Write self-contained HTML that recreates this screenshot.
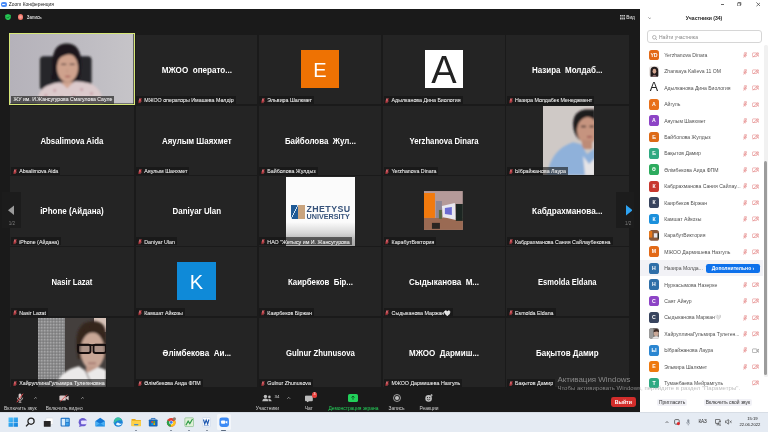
<!DOCTYPE html>
<html lang="ru"><head><meta charset="utf-8"><title>Zoom Конференция</title>
<style>
*{box-sizing:border-box;margin:0;padding:0}
html,body{width:768px;height:432px;overflow:hidden;background:#1a1a1a;font-family:"Liberation Sans","DejaVu Sans",sans-serif}
.abs,.tile,.lb,.sq,.nm,.pr,.vid,.pv,.sqimg,.zh{position:absolute}
#wrap{position:absolute;left:-6px;top:-6px;width:780px;height:444px;overflow:hidden;filter:blur(.4px);will-change:transform}
#in{position:absolute;left:6px;top:6px;width:768px;height:432px}
#title{left:-6px;top:-6px;width:780px;height:15px;background:#fff}
#title>*{transform:translate(6px,6px)}
#title .zi{position:absolute;left:1.1px;top:1.7px;width:5.600px;height:5.600px;border-radius:2px;background:#4a8cf7}
#title .zi:after{content:'';position:absolute;left:1.2px;top:1.900px;width:2.600px;height:1.900px;border-radius:.4px;background:#fff;box-shadow:1.500px 0 0 -.4px #fff}
#title .tt{position:absolute;left:8.8px;top:1.8px;font-size:4.9px;line-height:6px;color:#222;white-space:nowrap}
#main{left:-6px;top:9px;width:646px;height:403px;background:#1a1a1a}
.tile{background:#242424;overflow:hidden}
.tile.act{border:1.3px solid #d6e777}
.vid{left:0;top:0;width:100%;height:100%}
.pv{top:0;height:100%}
.nm{left:0;right:0;top:50%;margin-top:-5.6px;height:12px;line-height:12px;text-align:center;color:#fff;font-weight:bold;font-size:8.5px;white-space:nowrap;transform:scaleX(.95)}
.sq{left:50%;top:50%;width:38.4px;height:38.6px;margin:-20px 0 0 -19.2px;text-align:center;line-height:40.2px}
.sqimg{left:50%;top:50%;width:38.8px;height:38.9px;margin:-19.6px 0 0 -19.6px}
.lb{left:.8px;bottom:.2px;height:8.2px;padding:1.6px 2px 0 1.2px;background:rgba(18,18,18,.6);color:#f2f2f2;-webkit-text-stroke:.06px #f2f2f2;font-size:5.3px;line-height:6.6px;white-space:nowrap;display:flex;align-items:center}
.lb.nm0{left:1px;bottom:.2px;padding:0 2px 0 2px;font-size:5.15px;height:7.6px;line-height:7.6px;background:rgba(40,40,40,.72)}
.lb .m{width:4px;height:5.6px;margin:0 2.2px 0 .6px;flex:none;opacity:.92}
.zh{left:27.4px;top:.2px;width:69px;height:69px;background:#fbfbfb;overflow:hidden}
.zhb{position:absolute;left:0;right:0;bottom:0;height:24px;background:linear-gradient(#fbfbfb,#d8d8d8 45%,#b4b4b4 75%,#a8a8a8)}
.zlogo{position:absolute;left:5px;top:28px;width:14px;height:14.4px}
.zlogo i{position:absolute;left:0;top:0;width:7px;height:100%;background:linear-gradient(115deg,#1f5a96 46%,#cfe0f0 47%,#cfe0f0 53%,#1f5a96 54%)}
.zlogo b{position:absolute;right:0;top:0;width:6.6px;height:100%;background:#c9a47e}
.zt1,.zt2{position:absolute;left:20.6px;color:#36527a;font-weight:bold;white-space:nowrap}
.zt1{top:27.4px;font-size:8.8px;line-height:10px;letter-spacing:.4px}
.zt2{top:36.6px;font-size:7.2px;line-height:8px}
/* top overlay */
.sh{left:5px;top:14px;width:6px;height:6.4px}
.rec{left:17.7px;top:14.100px;width:5.800px;height:5.800px;border-radius:50%;background:radial-gradient(circle,#f9b0a8 0,#f58a7e 40%,#ea5246 100%)}
.rect{left:26.8px;top:13.6px;font-size:4.5px;line-height:7px;color:#fff;white-space:nowrap}
.vidl{left:619.6px;top:13.8px;font-size:4.8px;line-height:7px;color:#eee;white-space:nowrap;display:flex;align-items:center}
.vidl svg{width:5px;height:5px;margin-right:1.6px}
/* arrows */
.arb{top:192px;width:19px;height:36px;background:#1c1c1c}
.arn{font-size:4.6px;line-height:5px;color:#7c7c7c;text-align:center;width:19px;top:221px}
/* toolbar */
#tb{left:0;top:387.6px;width:640px;height:24.6px;background:#1a1a1a;box-shadow:-6px 0 0 #1a1a1a}
.tl{position:absolute;top:18px;font-size:4.9px;line-height:6px;color:#d2d2d2;white-space:nowrap;transform:translateX(-50%)}
.ti{position:absolute;transform:translate(-50%,-50%)}
.car{position:absolute;top:9.4px;width:3.4px;height:2px}
.leave{left:611px;top:397.2px;width:24.6px;height:10.2px;border-radius:2.4px;background:#d22d2b;color:#fff;font-size:5.2px;font-weight:bold;line-height:10.2px;text-align:center}
/* panel */
#panel{left:640px;top:9px;width:128px;height:403.2px;background:#fff;box-shadow:6px 0 0 #fff}
.ph{left:0;top:5px;width:128px;text-align:center;font-size:5.1px;font-weight:bold;line-height:8px;color:#222}
.srch{left:7.4px;top:21.4px;width:114.6px;height:12.8px;border:.6px solid #d6d6d6;border-radius:3px;background:#fff}
.srch span{position:absolute;left:10.6px;top:3px;font-size:5px;line-height:6.4px;color:#888;white-space:nowrap}
.srch svg{position:absolute;left:3.8px;top:3.6px;width:5.4px;height:5.4px}
.pr{left:0;width:123px;height:16.4px;top:0}
.pr.hl{background:#f2f2f6}
.av{position:absolute;left:8.6px;top:2.8px;width:10.8px;height:10.8px;border-radius:2.6px;color:#fff;font-size:5.2px;font-weight:bold;line-height:10.8px;text-align:center}
.av.big{background:#fff;color:#222;font-size:12.5px;font-weight:normal;border-radius:0}
.pn{position:absolute;left:24.2px;top:5.2px;font-size:5.1px;line-height:6px;color:#505050;white-space:nowrap}
.pm{position:absolute;left:102.6px;top:5.4px;width:4.3px;height:6px}
.pvd{position:absolute;left:111.6px;top:5.6px;width:7.4px;height:5.5px}
.more{position:absolute;left:66px;top:3.8px;width:54px;height:8.8px;border-radius:2.2px;background:#0e71eb;color:#fff;font-size:5px;font-weight:bold;line-height:8.8px;text-align:center;white-space:nowrap}
.pbtn{top:389.6px;height:7.6px;border-radius:2px;background:#f1f1f6;color:#333;font-size:4.9px;line-height:7.6px;text-align:center;white-space:nowrap}
.sbt{left:124.4px;top:36px;width:3.6px;height:332px;background:#f1f1f1;border-radius:1.5px}
.sbh{left:124.4px;top:152px;width:3px;height:214px;background:#9c9c9c;border-radius:1.5px}
/* watermark */
.wm1{left:557.4px;top:375.4px;font-size:7.95px;line-height:9px;color:rgba(170,170,170,.75);white-space:nowrap}
.wm2{left:557.4px;top:385.4px;font-size:6.05px;line-height:6px;color:rgba(170,170,170,.75);white-space:nowrap}
/* taskbar */
#task{left:0;top:412.2px;width:768px;height:19.8px;background:#e5ebf3;box-shadow:0 0 0 6px #e5ebf3;clip-path:inset(0 -6px -6px -6px)}
.tk{position:absolute;top:5px;width:10.4px;height:10.4px}
.tray{position:absolute;font-size:4.6px;line-height:6px;color:#222;white-space:nowrap}
.wc{position:absolute;top:0;color:#333}
</style></head><body>
<div id="wrap"><div id="in">
<div id="title" class="abs"><div class="zi"></div><div class="tt">Zoom Конференция</div>
<svg class="abs" style="left:720.6px;top:3.6px;width:3.6px;height:1px" viewBox="0 0 4 1"><rect width="4" height="1" fill="#555"/></svg>
<svg class="abs" style="left:737.4px;top:2px;width:4.4px;height:4.4px" viewBox="0 0 5 5"><rect x=".4" y="1.2" width="3.4" height="3.4" rx=".6" fill="none" stroke="#333" stroke-width=".7"/><path d="M1.4 1V.5h3v3h-.5" fill="none" stroke="#333" stroke-width=".7"/></svg>
<svg class="abs" style="left:755.6px;top:1.8px;width:4.8px;height:4.8px" viewBox="0 0 5 5"><path d="M.4.4L4.6 4.6M4.6.4L.4 4.6" stroke="#333" stroke-width=".7"/></svg>
</div>
<div id="main" class="abs"></div>
<div class="tile act" style="left:9.4px;top:33.4px;width:125.4px;height:71.5px"><svg class="vid" viewBox="0 0 124 70" preserveAspectRatio="none">
<defs><linearGradient id="g1" x1="0" x2="1"><stop offset="0" stop-color="#b5b2ba"/><stop offset=".6" stop-color="#bebcc2"/><stop offset="1" stop-color="#c6c4c8"/></linearGradient>
<filter id="b1"><feGaussianBlur stdDeviation="1.1"/></filter></defs>
<rect width="124" height="70" fill="url(#g1)"/>
<g filter="url(#b1)">
<rect x="30" y="22.5" width="52" height="34" rx="4" fill="#25252b"/>
<path d="M42.500 30 q0 -20.500 14.500 -20.500 q14.500 0 14.500 20 q0 12 -2 17 h-6 v-14 h-16 v14 h-6.500 q2 -8 1.500 -16.500z" fill="#1c191d"/>
<ellipse cx="57.800" cy="34" rx="10.600" ry="14.600" fill="#cfa28d"/>
<path d="M45.500 29 q2 -14 12 -13.500 q10 .5 12.500 12 q-5 -7 -11 -7 q-8 1 -13.500 8.500z" fill="#1c191d"/>
<path d="M27 70 q1 -14 10 -18 q8 -3 13 -3.500 l7.500 4.500 l8 -5.500 q10 .5 17 3 q10 5 11 19.500z" fill="#dccacc"/>
<path d="M50.500 47.500 l7 7.500 l7.500 -8 q-7 3 -14.500 .5z" fill="#d3a692"/>
<path d="M51.500 30.500 h5M60 30.500 h5" stroke="#4a3434" stroke-width="1.200"/>
<path d="M57.500 36 v3" stroke="#c09480" stroke-width="1.200"/>
<rect x="55.500" y="42" width="5" height="1.600" fill="#a8605c"/>
<circle cx="36" cy="62" r="1.500" fill="#c9a0a8"/><circle cx="45" cy="57" r="1.500" fill="#c9a0a8"/><circle cx="72" cy="56" r="1.500" fill="#c9a0a8"/><circle cx="82" cy="60" r="1.500" fill="#c9a0a8"/><circle cx="64" cy="63" r="1.500" fill="#c9a0a8"/><circle cx="52" cy="64" r="1.500" fill="#c9a0a8"/><circle cx="90" cy="66" r="1.500" fill="#c9a0a8"/>
</g></svg><div class="lb nm0"><span>ЖУ им. И.Жансугурова Смагулова Сауле</span></div></div>
<div class="tile" style="left:135.5px;top:35.0px;width:121.7px;height:69.2px"><div class="nm" style="transform:scaleX(0.953)">МЖОО&nbsp; операто...</div><div class="lb"><svg class="m" viewBox="0 0 5 6.6"><rect x="1.400" y=".2" width="2.200" height="4" rx="1.100" fill="#e07a80"/><path d="M.6 3a1.900 1.900 0 0 0 3.800 0M2.500 5v1.300" stroke="#dd5a62" stroke-width=".8" fill="none"/><path d="M4.500 .3L.6 6.300" stroke="#f0323c" stroke-width=".9"/></svg><span>МЖОО операторы Имашева Мөлдір</span></div></div>
<div class="tile" style="left:258.6px;top:35.0px;width:122.8px;height:69.2px"><div class="sq" style="background:#ee7203;color:#fff;font-size:20px">E</div><div class="lb"><svg class="m" viewBox="0 0 5 6.6"><rect x="1.400" y=".2" width="2.200" height="4" rx="1.100" fill="#e07a80"/><path d="M.6 3a1.900 1.900 0 0 0 3.800 0M2.500 5v1.300" stroke="#dd5a62" stroke-width=".8" fill="none"/><path d="M4.500 .3L.6 6.300" stroke="#f0323c" stroke-width=".9"/></svg><span>Эльвира Шалкмет</span></div></div>
<div class="tile" style="left:382.8px;top:35.0px;width:122.1px;height:69.2px"><div class="sq" style="background:#fff;color:#222;font-size:38px">A</div><div class="lb"><svg class="m" viewBox="0 0 5 6.6"><rect x="1.400" y=".2" width="2.200" height="4" rx="1.100" fill="#e07a80"/><path d="M.6 3a1.900 1.900 0 0 0 3.800 0M2.500 5v1.300" stroke="#dd5a62" stroke-width=".8" fill="none"/><path d="M4.500 .3L.6 6.300" stroke="#f0323c" stroke-width=".9"/></svg><span>Адылканова Дина Биология</span></div></div>
<div class="tile" style="left:506.2px;top:35.0px;width:122.6px;height:69.2px"><div class="nm" style="transform:scaleX(0.941)">Назира&nbsp; Молдаб...</div><div class="lb"><svg class="m" viewBox="0 0 5 6.6"><rect x="1.400" y=".2" width="2.200" height="4" rx="1.100" fill="#e07a80"/><path d="M.6 3a1.900 1.900 0 0 0 3.800 0M2.500 5v1.300" stroke="#dd5a62" stroke-width=".8" fill="none"/><path d="M4.500 .3L.6 6.300" stroke="#f0323c" stroke-width=".9"/></svg><span>Назира Молдабек Менеджмент</span></div></div>
<div class="tile" style="left:10.4px;top:105.7px;width:123.8px;height:69.2px"><div class="nm" style="transform:scaleX(0.924)">Absalimova Aida</div><div class="lb"><svg class="m" viewBox="0 0 5 6.6"><rect x="1.400" y=".2" width="2.200" height="4" rx="1.100" fill="#e07a80"/><path d="M.6 3a1.900 1.900 0 0 0 3.800 0M2.500 5v1.300" stroke="#dd5a62" stroke-width=".8" fill="none"/><path d="M4.500 .3L.6 6.300" stroke="#f0323c" stroke-width=".9"/></svg><span>Absalimova Aida</span></div></div>
<div class="tile" style="left:135.5px;top:105.7px;width:121.7px;height:69.2px"><div class="nm" style="transform:scaleX(0.926)">Аяулым Шаяхмет</div><div class="lb"><svg class="m" viewBox="0 0 5 6.6"><rect x="1.400" y=".2" width="2.200" height="4" rx="1.100" fill="#e07a80"/><path d="M.6 3a1.900 1.900 0 0 0 3.800 0M2.500 5v1.300" stroke="#dd5a62" stroke-width=".8" fill="none"/><path d="M4.500 .3L.6 6.300" stroke="#f0323c" stroke-width=".9"/></svg><span>Аяулым Шаяхмет</span></div></div>
<div class="tile" style="left:258.6px;top:105.7px;width:122.8px;height:69.2px"><div class="nm" style="transform:scaleX(0.933)">Байболова&nbsp; Жул...</div><div class="lb"><svg class="m" viewBox="0 0 5 6.6"><rect x="1.400" y=".2" width="2.200" height="4" rx="1.100" fill="#e07a80"/><path d="M.6 3a1.900 1.900 0 0 0 3.800 0M2.500 5v1.300" stroke="#dd5a62" stroke-width=".8" fill="none"/><path d="M4.500 .3L.6 6.300" stroke="#f0323c" stroke-width=".9"/></svg><span>Байболова Жулдыз</span></div></div>
<div class="tile" style="left:382.8px;top:105.7px;width:122.1px;height:69.2px"><div class="nm" style="transform:scaleX(0.907)">Yerzhanova Dinara</div><div class="lb"><svg class="m" viewBox="0 0 5 6.6"><rect x="1.400" y=".2" width="2.200" height="4" rx="1.100" fill="#e07a80"/><path d="M.6 3a1.900 1.900 0 0 0 3.800 0M2.500 5v1.300" stroke="#dd5a62" stroke-width=".8" fill="none"/><path d="M4.500 .3L.6 6.300" stroke="#f0323c" stroke-width=".9"/></svg><span>Yerzhanova Dinara</span></div></div>
<div class="tile" style="left:506.2px;top:105.7px;width:122.6px;height:69.2px"><svg class="pv" style="left:36.5px;width:51.5px" viewBox="0 0 51.5 69.2" preserveAspectRatio="none">
<defs><filter id="b2"><feGaussianBlur stdDeviation="0.9"/></filter></defs>
<rect width="51.5" height="69.2" fill="#cfc9c6"/>
<g filter="url(#b2)">
<path d="M30 17 q1 -12 12 -13.500 h10 v30 h-16 q-6 -6 -6 -16.500z" fill="#1e1a1b"/>
<ellipse cx="44.500" cy="24.500" rx="10.500" ry="13.500" fill="#c6947f"/>
<path d="M33.500 21 q3 -11 18 -11.500 v-5 h-12 q-8 2 -8 16z" fill="#1e1a1b"/>
<rect x="39" y="34" width="10" height="9" fill="#bd8b77"/>
<path d="M4 69.2 q4 -26 26 -33 l8 2 l6 10 l8 -6 v27z" fill="#8fb1da"/>
<path d="M40 50 l6 8 l6 -6 v17 h-10z" fill="#e6e4e6"/>
<path d="M38 20.500 h5M46.500 20.500 h4.500" stroke="#3a2828" stroke-width="1.400"/>
<path d="M44 30.800 h5" stroke="#9a5050" stroke-width="1.500"/>
</g></svg><div class="lb"><svg class="m" viewBox="0 0 5 6.6"><rect x="1.400" y=".2" width="2.200" height="4" rx="1.100" fill="#e07a80"/><path d="M.6 3a1.900 1.900 0 0 0 3.800 0M2.500 5v1.300" stroke="#dd5a62" stroke-width=".8" fill="none"/><path d="M4.500 .3L.6 6.300" stroke="#f0323c" stroke-width=".9"/></svg><span>Ыбрайжанова Лаура</span></div></div>
<div class="tile" style="left:10.4px;top:176.4px;width:123.8px;height:69.2px"><div class="nm" style="transform:scaleX(0.938)">iPhone (Айдана)</div><div class="lb"><svg class="m" viewBox="0 0 5 6.6"><rect x="1.400" y=".2" width="2.200" height="4" rx="1.100" fill="#e07a80"/><path d="M.6 3a1.900 1.900 0 0 0 3.800 0M2.500 5v1.300" stroke="#dd5a62" stroke-width=".8" fill="none"/><path d="M4.500 .3L.6 6.300" stroke="#f0323c" stroke-width=".9"/></svg><span>iPhone (Айдана)</span></div></div>
<div class="tile" style="left:135.5px;top:176.4px;width:121.7px;height:69.2px"><div class="nm" style="transform:scaleX(0.933)">Daniyar Ulan</div><div class="lb"><svg class="m" viewBox="0 0 5 6.6"><rect x="1.400" y=".2" width="2.200" height="4" rx="1.100" fill="#e07a80"/><path d="M.6 3a1.900 1.900 0 0 0 3.800 0M2.500 5v1.300" stroke="#dd5a62" stroke-width=".8" fill="none"/><path d="M4.500 .3L.6 6.300" stroke="#f0323c" stroke-width=".9"/></svg><span>Daniyar Ulan</span></div></div>
<div class="tile" style="left:258.6px;top:176.4px;width:122.8px;height:69.2px"><div class="zh"><div class="zhb"></div>
<div class="zlogo"><i></i><b></b></div>
<div class="zt1">ZHETYSU</div><div class="zt2">UNIVERSITY</div></div><div class="lb"><svg class="m" viewBox="0 0 5 6.6"><rect x="1.400" y=".2" width="2.200" height="4" rx="1.100" fill="#e07a80"/><path d="M.6 3a1.900 1.900 0 0 0 3.800 0M2.500 5v1.300" stroke="#dd5a62" stroke-width=".8" fill="none"/><path d="M4.500 .3L.6 6.300" stroke="#f0323c" stroke-width=".9"/></svg><span>НАО &quot;Жетысу им И. Жансугурова</span></div></div>
<div class="tile" style="left:382.8px;top:176.4px;width:122.1px;height:69.2px"><svg class="sqimg" viewBox="0 0 39 39">
<defs><filter id="b4"><feGaussianBlur stdDeviation="0.8"/></filter></defs>
<rect width="39" height="39" fill="#b59a99"/>
<g filter="url(#b4)">
<rect y="27" width="39" height="12" fill="#9a6a52"/>
<rect x="0" y="2" width="11" height="25" fill="#f27a10"/>
<rect x="12" y="10" width="6" height="17" fill="#8d8795"/>
<path d="M18 15 L31 12 L32 29 L19 26z" fill="#e8e8f0"/>
<path d="M21 17 L28 16 L28 24 L21 23z" fill="#6c6cd2"/>
<rect x="32" y="13" width="7" height="17" fill="#1c2822"/>
<rect x="8" y="32" width="8" height="6" fill="#2a2624"/>
<rect x="15" y="19" width="3" height="9" fill="#5a6a40"/>
</g></svg><div class="lb"><svg class="m" viewBox="0 0 5 6.6"><rect x="1.400" y=".2" width="2.200" height="4" rx="1.100" fill="#e07a80"/><path d="M.6 3a1.900 1.900 0 0 0 3.800 0M2.500 5v1.300" stroke="#dd5a62" stroke-width=".8" fill="none"/><path d="M4.500 .3L.6 6.300" stroke="#f0323c" stroke-width=".9"/></svg><span>КарабутВиктория</span></div></div>
<div class="tile" style="left:506.2px;top:176.4px;width:122.6px;height:69.2px"><div class="nm" style="transform:scaleX(0.962)">Кабдрахманова...</div><div class="lb"><svg class="m" viewBox="0 0 5 6.6"><rect x="1.400" y=".2" width="2.200" height="4" rx="1.100" fill="#e07a80"/><path d="M.6 3a1.900 1.900 0 0 0 3.800 0M2.500 5v1.300" stroke="#dd5a62" stroke-width=".8" fill="none"/><path d="M4.500 .3L.6 6.300" stroke="#f0323c" stroke-width=".9"/></svg><span>Кабдрахманова Сания Сайлаубековна</span></div></div>
<div class="tile" style="left:10.4px;top:247.1px;width:123.8px;height:69.2px"><div class="nm" style="transform:scaleX(0.904)">Nasir Lazat</div><div class="lb"><svg class="m" viewBox="0 0 5 6.6"><rect x="1.400" y=".2" width="2.200" height="4" rx="1.100" fill="#e07a80"/><path d="M.6 3a1.900 1.900 0 0 0 3.800 0M2.500 5v1.300" stroke="#dd5a62" stroke-width=".8" fill="none"/><path d="M4.500 .3L.6 6.300" stroke="#f0323c" stroke-width=".9"/></svg><span>Nasir Lazat</span></div></div>
<div class="tile" style="left:135.5px;top:247.1px;width:121.7px;height:69.2px"><div class="sq" style="background:#0f8ad8;color:#fff;font-size:20px">K</div><div class="lb"><svg class="m" viewBox="0 0 5 6.6"><rect x="1.400" y=".2" width="2.200" height="4" rx="1.100" fill="#e07a80"/><path d="M.6 3a1.900 1.900 0 0 0 3.800 0M2.500 5v1.300" stroke="#dd5a62" stroke-width=".8" fill="none"/><path d="M4.500 .3L.6 6.300" stroke="#f0323c" stroke-width=".9"/></svg><span>Камшат Айкозы</span></div></div>
<div class="tile" style="left:258.6px;top:247.1px;width:122.8px;height:69.2px"><div class="nm" style="transform:scaleX(0.923)">Каирбеков&nbsp; Бір...</div><div class="lb"><svg class="m" viewBox="0 0 5 6.6"><rect x="1.400" y=".2" width="2.200" height="4" rx="1.100" fill="#e07a80"/><path d="M.6 3a1.900 1.900 0 0 0 3.800 0M2.500 5v1.300" stroke="#dd5a62" stroke-width=".8" fill="none"/><path d="M4.500 .3L.6 6.300" stroke="#f0323c" stroke-width=".9"/></svg><span>Каирбеков Біржан</span></div></div>
<div class="tile" style="left:382.8px;top:247.1px;width:122.1px;height:69.2px"><div class="nm" style="transform:scaleX(0.945)">Сыдыканова&nbsp; М...</div><div class="lb"><svg class="m" viewBox="0 0 5 6.6"><rect x="1.400" y=".2" width="2.200" height="4" rx="1.100" fill="#e07a80"/><path d="M.6 3a1.900 1.900 0 0 0 3.800 0M2.500 5v1.300" stroke="#dd5a62" stroke-width=".8" fill="none"/><path d="M4.500 .3L.6 6.300" stroke="#f0323c" stroke-width=".9"/></svg><span>Сыдыканова Маржан🤍</span></div></div>
<div class="tile" style="left:506.2px;top:247.1px;width:122.6px;height:69.2px"><div class="nm" style="transform:scaleX(0.89)">Esmolda Eldana</div><div class="lb"><svg class="m" viewBox="0 0 5 6.6"><rect x="1.400" y=".2" width="2.200" height="4" rx="1.100" fill="#e07a80"/><path d="M.6 3a1.900 1.900 0 0 0 3.800 0M2.500 5v1.300" stroke="#dd5a62" stroke-width=".8" fill="none"/><path d="M4.500 .3L.6 6.300" stroke="#f0323c" stroke-width=".9"/></svg><span>Esmolda Eldana</span></div></div>
<div class="tile" style="left:10.4px;top:317.8px;width:123.8px;height:69.2px"><svg class="pv" style="left:27.6px;width:68px" viewBox="0 0 68 69.2" preserveAspectRatio="none">
<defs><filter id="b3"><feGaussianBlur stdDeviation="0.9"/></filter><filter id="b3b"><feGaussianBlur stdDeviation="0.45"/></filter>
<pattern id="pt" width="3" height="3" patternUnits="userSpaceOnUse"><rect width="3" height="3" fill="#8a8a8b"/><rect x="0" y="0" width="1.4" height="1.4" fill="#a6a6a7"/><rect x="1.6" y="1.700" width="1.200" height="1.200" fill="#777778"/></pattern></defs>
<rect width="68" height="69.2" fill="#443f3d"/>
<rect width="27" height="69.2" fill="url(#pt)"/>
<rect x="56" width="12" height="14" fill="#d6c2b8"/>
<g filter="url(#b3)">
<path d="M38.500 30 q-2 -26 16 -27 q13.500 0 13.500 14 v24 h-28z" fill="#35251f"/>
<ellipse cx="54.500" cy="33" rx="12" ry="18.500" fill="#c9a797"/>
<path d="M41 24 q3 -16 16 -16 q10 1 11 11 q-9 -7 -17 -4 q-6 3 -10 9z" fill="#35251f"/>
<rect x="48" y="48" width="12" height="8" fill="#bf9a8a"/>
<path d="M17 69.2 q5 -17 24 -21 l9 6.500 l10 -5.500 q5 1 8 3 v17z" fill="#ebe9e9"/>
<path d="M46 50 q6 12 8 19" stroke="#3a3030" stroke-width=".8" fill="none"/>
<rect x="50" y="44.500" width="8" height="1.600" fill="#a0706a"/>
</g>
<g filter="url(#b3b)">
<rect x="39" y="26.200" width="29" height="1.800" fill="#141111"/>
<rect x="40" y="26.800" width="12.500" height="8.200" rx="2" fill="rgba(120,110,105,.35)" stroke="#141111" stroke-width="1.900"/>
<rect x="55.500" y="26.800" width="12.500" height="8.200" rx="2" fill="rgba(120,110,105,.35)" stroke="#141111" stroke-width="1.900"/>
</g></svg><div class="lb"><svg class="m" viewBox="0 0 5 6.6"><rect x="1.400" y=".2" width="2.200" height="4" rx="1.100" fill="#e07a80"/><path d="M.6 3a1.900 1.900 0 0 0 3.800 0M2.500 5v1.300" stroke="#dd5a62" stroke-width=".8" fill="none"/><path d="M4.500 .3L.6 6.300" stroke="#f0323c" stroke-width=".9"/></svg><span>ХайруллинаГульмира Тулегеновна</span></div></div>
<div class="tile" style="left:135.5px;top:317.8px;width:121.7px;height:69.2px"><div class="nm" style="transform:scaleX(0.946)">Әлімбекова&nbsp; Аи...</div><div class="lb"><svg class="m" viewBox="0 0 5 6.6"><rect x="1.400" y=".2" width="2.200" height="4" rx="1.100" fill="#e07a80"/><path d="M.6 3a1.900 1.900 0 0 0 3.800 0M2.500 5v1.300" stroke="#dd5a62" stroke-width=".8" fill="none"/><path d="M4.500 .3L.6 6.300" stroke="#f0323c" stroke-width=".9"/></svg><span>Әлімбекова Аида ФПМ</span></div></div>
<div class="tile" style="left:258.6px;top:317.8px;width:122.8px;height:69.2px"><div class="nm" style="transform:scaleX(0.913)">Gulnur Zhunusova</div><div class="lb"><svg class="m" viewBox="0 0 5 6.6"><rect x="1.400" y=".2" width="2.200" height="4" rx="1.100" fill="#e07a80"/><path d="M.6 3a1.900 1.900 0 0 0 3.800 0M2.500 5v1.300" stroke="#dd5a62" stroke-width=".8" fill="none"/><path d="M4.500 .3L.6 6.300" stroke="#f0323c" stroke-width=".9"/></svg><span>Gulnur Zhunusova</span></div></div>
<div class="tile" style="left:382.8px;top:317.8px;width:122.1px;height:69.2px"><div class="nm" style="transform:scaleX(0.945)">МЖОО&nbsp; Дармиш...</div><div class="lb"><svg class="m" viewBox="0 0 5 6.6"><rect x="1.400" y=".2" width="2.200" height="4" rx="1.100" fill="#e07a80"/><path d="M.6 3a1.900 1.900 0 0 0 3.800 0M2.500 5v1.300" stroke="#dd5a62" stroke-width=".8" fill="none"/><path d="M4.500 .3L.6 6.300" stroke="#f0323c" stroke-width=".9"/></svg><span>МЖОО Дармишева Назгуль</span></div></div>
<div class="tile" style="left:506.2px;top:317.8px;width:122.6px;height:69.2px"><div class="nm" style="transform:scaleX(0.938)">Бақытов Дамир</div><div class="lb"><svg class="m" viewBox="0 0 5 6.6"><rect x="1.400" y=".2" width="2.200" height="4" rx="1.100" fill="#e07a80"/><path d="M.6 3a1.900 1.900 0 0 0 3.800 0M2.500 5v1.300" stroke="#dd5a62" stroke-width=".8" fill="none"/><path d="M4.500 .3L.6 6.300" stroke="#f0323c" stroke-width=".9"/></svg><span>Бақытов Дамир</span></div></div>
<svg class="abs sh" viewBox="0 0 6 6.4"><path d="M3 .1L5.8 1v2.4Q5.8 5.4 3 6.3Q.2 5.4.2 3.400V1z" fill="#25c553"/><path d="M1.8 3.200l.9.900L4.300 2.400" stroke="#0c5a25" stroke-width=".7" fill="none"/></svg>
<div class="abs rec"></div><div class="abs rect">Запись</div>
<div class="abs vidl"><svg viewBox="0 0 5 5"><path d="M0 .5h5M0 2h5M0 3.500h5M0 5h5" stroke="#eee" stroke-width=".8"/><path d="M1.700 0v5M3.400 0v5" stroke="#1a1a1a" stroke-width=".5"/></svg>Вид</div>
<div class="abs arb" style="left:2.4px"></div>
<svg class="abs" style="left:7.800px;top:205px;width:6.6px;height:10.6px" viewBox="0 0 6.6 10.6"><path d="M6.600 0V10.600L0 5.300z" fill="#9b9b9b"/></svg>
<div class="abs arn" style="left:2.400px">1/2</div>
<div class="abs arb" style="left:616px;width:17.6px"></div>
<svg class="abs" style="left:625.6px;top:205.4px;width:6.6px;height:10.6px" viewBox="0 0 6.6 10.6"><path d="M0 0V10.600L6.600 5.300z" fill="#2ea3f2"/></svg>
<div class="abs arn" style="left:618.6px">1/2</div>

<div id="tb" class="abs">
 <svg class="ti" style="left:20.2px;top:10.6px;width:8px;height:9.700px" viewBox="0 0 7.4 9"><rect x="2.400" y=".4" width="2.600" height="5" rx="1.300" fill="#d9c9c9"/><path d="M1.200 4.200a2.500 2.500 0 0 0 5 0M3.700 6.800v1.600M2.400 8.500h2.600" stroke="#d9c9c9" stroke-width=".7" fill="none"/><path d="M6.600 .4L.8 8.400" stroke="#e0474a" stroke-width=".9"/></svg>
 <svg class="car" style="left:34px" viewBox="0 0 3.400 2"><path d="M.2 1.800L1.700.3l1.500 1.500" stroke="#ccc" stroke-width=".6" fill="none"/></svg>
 <div class="tl" style="left:20.4px">Включить звук</div>
 <svg class="ti" style="left:64px;top:10.8px;width:10px;height:7.6px" viewBox="0 0 10 7.6"><rect x=".4" y="1.200" width="6.400" height="5.200" rx="1.200" fill="#d9c9c9"/><path d="M7.200 3L9.600 1.500v4.600L7.200 4.600z" fill="#d9c9c9"/><path d="M8.200 .3L1.400 7.300" stroke="#e0474a" stroke-width=".9"/></svg>
 <svg class="car" style="left:81px" viewBox="0 0 3.400 2"><path d="M.2 1.800L1.700.3l1.500 1.500" stroke="#ccc" stroke-width=".6" fill="none"/></svg>
 <div class="tl" style="left:64.2px">Включить видео</div>

 <svg class="ti" style="left:267.4px;top:10.6px;width:10px;height:7px" viewBox="0 0 10 7"><circle cx="3.400" cy="2" r="1.700" fill="#bdbdbd"/><path d="M.2 7q.2-3 3.200-3t3.200 3z" fill="#bdbdbd"/><circle cx="7.400" cy="2.400" r="1.300" fill="#bdbdbd"/><path d="M7 7q0-1.600-.8-2.400q3.400-.6 3.600 2.400z" fill="#bdbdbd"/></svg>
 <div class="tray" style="left:274.6px;top:6.4px;color:#ddd;font-size:4.4px">34</div>
 <svg class="car" style="left:287.4px" viewBox="0 0 3.400 2"><path d="M.2 1.800L1.700.3l1.500 1.500" stroke="#ccc" stroke-width=".6" fill="none"/></svg>
 <div class="tl" style="left:267.4px">Участники</div>

 <svg class="ti" style="left:308.6px;top:11px;width:8.400px;height:7.6px" viewBox="0 0 8.4 7.6"><path d="M1.200 .4h6a1 1 0 0 1 1 1v3.600a1 1 0 0 1-1 1H4.200L2.200 7.400V6H1.200a1 1 0 0 1-1-1V1.400a1 1 0 0 1 1-1z" fill="#bdbdbd"/></svg>
 <div class="abs" style="left:311.8px;top:4.6px;width:5.6px;height:5.6px;border-radius:50%;background:#e8403c;color:#fff;font-size:3.6px;line-height:5.6px;text-align:center">3</div>
 <div class="tl" style="left:308.8px">Чат</div>

 <div class="abs" style="left:348.2px;top:6.6px;width:10.2px;height:7.400px;border-radius:1.600px;background:#22d05a"></div>
 <svg class="ti" style="left:353.3px;top:10.300px;width:4px;height:4.600px" viewBox="0 0 4 4.6"><path d="M2 .3v4M.4 1.800L2 .3l1.600 1.500" stroke="#0a4d20" stroke-width=".8" fill="none"/></svg>
 <div class="tl" style="left:353.4px;color:#25d55c">Демонстрация экрана</div>

 <svg class="ti" style="left:396.6px;top:10.8px;width:8px;height:8px" viewBox="0 0 8 8"><circle cx="4" cy="4" r="3.500" fill="none" stroke="#bdbdbd" stroke-width=".8"/><circle cx="4" cy="4" r="2" fill="#bdbdbd"/></svg>
 <div class="tl" style="left:396.6px">Запись</div>

 <svg class="ti" style="left:428.8px;top:10.8px;width:8.400px;height:8.400px" viewBox="0 0 8.4 8.4"><circle cx="3.800" cy="4.600" r="3.300" fill="#bdbdbd"/><circle cx="2.700" cy="3.800" r=".55" fill="#1a1a1a"/><circle cx="4.900" cy="3.800" r=".55" fill="#1a1a1a"/><path d="M2.200 5.400q1.600 1.600 3.200 0" stroke="#1a1a1a" stroke-width=".6" fill="none"/><path d="M6.800 .2v2.400M5.600 1.400h2.400" stroke="#bdbdbd" stroke-width=".8"/></svg>
 <div class="tl" style="left:429px">Реакции</div>
</div>
<div class="abs leave">Выйти</div>

<div id="panel" class="abs">
 <svg class="abs" style="left:7.6px;top:8px;width:3.6px;height:2.200px" viewBox="0 0 3.6 2.200"><path d="M.3.300L1.800 1.800 3.300.3" stroke="#666" stroke-width=".6" fill="none"/></svg>
 <div class="abs ph">Участники (34)</div>
 <div class="abs srch"><svg viewBox="0 0 5.4 5.4"><circle cx="2.300" cy="2.300" r="1.800" fill="none" stroke="#888" stroke-width=".6"/><path d="M3.600 3.600L5.100 5.100" stroke="#888" stroke-width=".6"/></svg><span>Найти участника</span></div>
 <div style="position:absolute;left:0;top:0;width:128px;height:385px;overflow:hidden">
<div class="pr" style="top:37.8px"><div class="av" style="background:#e36a17">YD</div><span class="pn">Yerzhanova Dinara</span><svg class="pm" viewBox="0 0 5 7"><rect x="1.6" y=".4" width="1.8" height="3.6" rx=".9" fill="none" stroke="#e27c7c" stroke-width=".6"/><path d="M.7 3.2a1.8 1.8 0 0 0 3.6 0M2.5 5v1.4" stroke="#e27c7c" stroke-width=".6" fill="none"/><path d="M4.6 .3L.6 6.4" stroke="#e27c7c" stroke-width=".7"/></svg><svg class="pvd" viewBox="0 0 8 6"><rect x=".4" y="1" width="5" height="4" rx=".8" fill="none" stroke="#e27c7c" stroke-width=".6"/><path d="M5.4 2.6L7.5 1.3v3.4L5.4 3.4z" fill="none" stroke="#e27c7c" stroke-width=".6"/><path d="M6.6 .2L1 5.8" stroke="#e27c7c" stroke-width=".7"/></svg></div>
<div class="pr" style="top:54.2px"><svg class="av" viewBox="0 0 10 10"><rect width="10" height="10" rx="2" fill="#e9e4e2"/><path d="M1.400 10V4.600Q1.400.8 5 .8T8.600 4.600V10z" fill="#241c1c"/><ellipse cx="5" cy="4.900" rx="1.700" ry="2.300" fill="#d2a48e"/><path d="M3 10q.4-1.800 2-1.800t2 1.800z" fill="#8a6a6a"/></svg><span class="pn">Zhansaya Kalieva 11 OM</span><svg class="pm" viewBox="0 0 5 7"><rect x="1.6" y=".4" width="1.8" height="3.6" rx=".9" fill="none" stroke="#e27c7c" stroke-width=".6"/><path d="M.7 3.2a1.8 1.8 0 0 0 3.6 0M2.5 5v1.4" stroke="#e27c7c" stroke-width=".6" fill="none"/><path d="M4.6 .3L.6 6.4" stroke="#e27c7c" stroke-width=".7"/></svg><svg class="pvd" viewBox="0 0 8 6"><rect x=".4" y="1" width="5" height="4" rx=".8" fill="none" stroke="#e27c7c" stroke-width=".6"/><path d="M5.4 2.6L7.5 1.3v3.4L5.4 3.4z" fill="none" stroke="#e27c7c" stroke-width=".6"/><path d="M6.6 .2L1 5.8" stroke="#e27c7c" stroke-width=".7"/></svg></div>
<div class="pr" style="top:70.6px"><div class="av big">A</div><span class="pn">Адылканова Дина Биология</span><svg class="pm" viewBox="0 0 5 7"><rect x="1.6" y=".4" width="1.8" height="3.6" rx=".9" fill="none" stroke="#e27c7c" stroke-width=".6"/><path d="M.7 3.2a1.8 1.8 0 0 0 3.6 0M2.5 5v1.4" stroke="#e27c7c" stroke-width=".6" fill="none"/><path d="M4.6 .3L.6 6.4" stroke="#e27c7c" stroke-width=".7"/></svg><svg class="pvd" viewBox="0 0 8 6"><rect x=".4" y="1" width="5" height="4" rx=".8" fill="none" stroke="#e27c7c" stroke-width=".6"/><path d="M5.4 2.6L7.5 1.3v3.4L5.4 3.4z" fill="none" stroke="#e27c7c" stroke-width=".6"/><path d="M6.6 .2L1 5.8" stroke="#e27c7c" stroke-width=".7"/></svg></div>
<div class="pr" style="top:87.0px"><div class="av" style="background:#e8701a">A</div><span class="pn">Айгуль</span><svg class="pm" viewBox="0 0 5 7"><rect x="1.6" y=".4" width="1.8" height="3.6" rx=".9" fill="none" stroke="#e27c7c" stroke-width=".6"/><path d="M.7 3.2a1.8 1.8 0 0 0 3.6 0M2.5 5v1.4" stroke="#e27c7c" stroke-width=".6" fill="none"/><path d="M4.6 .3L.6 6.4" stroke="#e27c7c" stroke-width=".7"/></svg><svg class="pvd" viewBox="0 0 8 6"><rect x=".4" y="1" width="5" height="4" rx=".8" fill="none" stroke="#e27c7c" stroke-width=".6"/><path d="M5.4 2.6L7.5 1.3v3.4L5.4 3.4z" fill="none" stroke="#e27c7c" stroke-width=".6"/><path d="M6.6 .2L1 5.8" stroke="#e27c7c" stroke-width=".7"/></svg></div>
<div class="pr" style="top:103.4px"><div class="av" style="background:#8d44c6">A</div><span class="pn">Аяулым Шаяхмет</span><svg class="pm" viewBox="0 0 5 7"><rect x="1.6" y=".4" width="1.8" height="3.6" rx=".9" fill="none" stroke="#e27c7c" stroke-width=".6"/><path d="M.7 3.2a1.8 1.8 0 0 0 3.6 0M2.5 5v1.4" stroke="#e27c7c" stroke-width=".6" fill="none"/><path d="M4.6 .3L.6 6.4" stroke="#e27c7c" stroke-width=".7"/></svg><svg class="pvd" viewBox="0 0 8 6"><rect x=".4" y="1" width="5" height="4" rx=".8" fill="none" stroke="#e27c7c" stroke-width=".6"/><path d="M5.4 2.6L7.5 1.3v3.4L5.4 3.4z" fill="none" stroke="#e27c7c" stroke-width=".6"/><path d="M6.6 .2L1 5.8" stroke="#e27c7c" stroke-width=".7"/></svg></div>
<div class="pr" style="top:119.8px"><div class="av" style="background:#dd6a17">Б</div><span class="pn">Байболова Жулдыз</span><svg class="pm" viewBox="0 0 5 7"><rect x="1.6" y=".4" width="1.8" height="3.6" rx=".9" fill="none" stroke="#e27c7c" stroke-width=".6"/><path d="M.7 3.2a1.8 1.8 0 0 0 3.6 0M2.5 5v1.4" stroke="#e27c7c" stroke-width=".6" fill="none"/><path d="M4.6 .3L.6 6.4" stroke="#e27c7c" stroke-width=".7"/></svg><svg class="pvd" viewBox="0 0 8 6"><rect x=".4" y="1" width="5" height="4" rx=".8" fill="none" stroke="#e27c7c" stroke-width=".6"/><path d="M5.4 2.6L7.5 1.3v3.4L5.4 3.4z" fill="none" stroke="#e27c7c" stroke-width=".6"/><path d="M6.6 .2L1 5.8" stroke="#e27c7c" stroke-width=".7"/></svg></div>
<div class="pr" style="top:136.2px"><div class="av" style="background:#2fa982">Б</div><span class="pn">Бақытов Дамир</span><svg class="pm" viewBox="0 0 5 7"><rect x="1.6" y=".4" width="1.8" height="3.6" rx=".9" fill="none" stroke="#e27c7c" stroke-width=".6"/><path d="M.7 3.2a1.8 1.8 0 0 0 3.6 0M2.5 5v1.4" stroke="#e27c7c" stroke-width=".6" fill="none"/><path d="M4.6 .3L.6 6.4" stroke="#e27c7c" stroke-width=".7"/></svg><svg class="pvd" viewBox="0 0 8 6"><rect x=".4" y="1" width="5" height="4" rx=".8" fill="none" stroke="#e27c7c" stroke-width=".6"/><path d="M5.4 2.6L7.5 1.3v3.4L5.4 3.4z" fill="none" stroke="#e27c7c" stroke-width=".6"/><path d="M6.6 .2L1 5.8" stroke="#e27c7c" stroke-width=".7"/></svg></div>
<div class="pr" style="top:152.6px"><div class="av" style="background:#2dab5e">Ә</div><span class="pn">Әлімбекова Аида ФПМ</span><svg class="pm" viewBox="0 0 5 7"><rect x="1.6" y=".4" width="1.8" height="3.6" rx=".9" fill="none" stroke="#e27c7c" stroke-width=".6"/><path d="M.7 3.2a1.8 1.8 0 0 0 3.6 0M2.5 5v1.4" stroke="#e27c7c" stroke-width=".6" fill="none"/><path d="M4.6 .3L.6 6.4" stroke="#e27c7c" stroke-width=".7"/></svg><svg class="pvd" viewBox="0 0 8 6"><rect x=".4" y="1" width="5" height="4" rx=".8" fill="none" stroke="#e27c7c" stroke-width=".6"/><path d="M5.4 2.6L7.5 1.3v3.4L5.4 3.4z" fill="none" stroke="#e27c7c" stroke-width=".6"/><path d="M6.6 .2L1 5.8" stroke="#e27c7c" stroke-width=".7"/></svg></div>
<div class="pr" style="top:169.0px"><div class="av" style="background:#c8382f">К</div><span class="pn">Кабдрахманова Сания Сайлау...</span><svg class="pm" viewBox="0 0 5 7"><rect x="1.6" y=".4" width="1.8" height="3.6" rx=".9" fill="none" stroke="#e27c7c" stroke-width=".6"/><path d="M.7 3.2a1.8 1.8 0 0 0 3.6 0M2.5 5v1.4" stroke="#e27c7c" stroke-width=".6" fill="none"/><path d="M4.6 .3L.6 6.4" stroke="#e27c7c" stroke-width=".7"/></svg><svg class="pvd" viewBox="0 0 8 6"><rect x=".4" y="1" width="5" height="4" rx=".8" fill="none" stroke="#e27c7c" stroke-width=".6"/><path d="M5.4 2.6L7.5 1.3v3.4L5.4 3.4z" fill="none" stroke="#e27c7c" stroke-width=".6"/><path d="M6.6 .2L1 5.8" stroke="#e27c7c" stroke-width=".7"/></svg></div>
<div class="pr" style="top:185.4px"><div class="av" style="background:#38445e">К</div><span class="pn">Каирбеков Біржан</span><svg class="pm" viewBox="0 0 5 7"><rect x="1.6" y=".4" width="1.8" height="3.6" rx=".9" fill="none" stroke="#e27c7c" stroke-width=".6"/><path d="M.7 3.2a1.8 1.8 0 0 0 3.6 0M2.5 5v1.4" stroke="#e27c7c" stroke-width=".6" fill="none"/><path d="M4.6 .3L.6 6.4" stroke="#e27c7c" stroke-width=".7"/></svg><svg class="pvd" viewBox="0 0 8 6"><rect x=".4" y="1" width="5" height="4" rx=".8" fill="none" stroke="#e27c7c" stroke-width=".6"/><path d="M5.4 2.6L7.5 1.3v3.4L5.4 3.4z" fill="none" stroke="#e27c7c" stroke-width=".6"/><path d="M6.6 .2L1 5.8" stroke="#e27c7c" stroke-width=".7"/></svg></div>
<div class="pr" style="top:201.8px"><div class="av" style="background:#1b90dc">К</div><span class="pn">Камшат Айкозы</span><svg class="pm" viewBox="0 0 5 7"><rect x="1.6" y=".4" width="1.8" height="3.6" rx=".9" fill="none" stroke="#e27c7c" stroke-width=".6"/><path d="M.7 3.2a1.8 1.8 0 0 0 3.6 0M2.5 5v1.4" stroke="#e27c7c" stroke-width=".6" fill="none"/><path d="M4.6 .3L.6 6.4" stroke="#e27c7c" stroke-width=".7"/></svg><svg class="pvd" viewBox="0 0 8 6"><rect x=".4" y="1" width="5" height="4" rx=".8" fill="none" stroke="#e27c7c" stroke-width=".6"/><path d="M5.4 2.6L7.5 1.3v3.4L5.4 3.4z" fill="none" stroke="#e27c7c" stroke-width=".6"/><path d="M6.6 .2L1 5.8" stroke="#e27c7c" stroke-width=".7"/></svg></div>
<div class="pr" style="top:218.2px"><svg class="av" viewBox="0 0 10 10"><rect width="10" height="10" rx="2" fill="#8a5a3c"/><rect x="0" y="1" width="3" height="6" fill="#e8781a"/><rect x="4.5" y="3" width="3.5" height="4" fill="#e6e6ee"/><rect x="8" y="3" width="2" height="5" fill="#26302a"/></svg><span class="pn">КарабутВиктория</span><svg class="pm" viewBox="0 0 5 7"><rect x="1.6" y=".4" width="1.8" height="3.6" rx=".9" fill="none" stroke="#e27c7c" stroke-width=".6"/><path d="M.7 3.2a1.8 1.8 0 0 0 3.6 0M2.5 5v1.4" stroke="#e27c7c" stroke-width=".6" fill="none"/><path d="M4.6 .3L.6 6.4" stroke="#e27c7c" stroke-width=".7"/></svg><svg class="pvd" viewBox="0 0 8 6"><rect x=".4" y="1" width="5" height="4" rx=".8" fill="none" stroke="#e27c7c" stroke-width=".6"/><path d="M5.4 2.6L7.5 1.3v3.4L5.4 3.4z" fill="none" stroke="#e27c7c" stroke-width=".6"/><path d="M6.6 .2L1 5.8" stroke="#e27c7c" stroke-width=".7"/></svg></div>
<div class="pr" style="top:234.6px"><div class="av" style="background:#e36a17">М</div><span class="pn">МЖОО Дармишева Назгуль</span><svg class="pm" viewBox="0 0 5 7"><rect x="1.6" y=".4" width="1.8" height="3.6" rx=".9" fill="none" stroke="#e27c7c" stroke-width=".6"/><path d="M.7 3.2a1.8 1.8 0 0 0 3.6 0M2.5 5v1.4" stroke="#e27c7c" stroke-width=".6" fill="none"/><path d="M4.6 .3L.6 6.4" stroke="#e27c7c" stroke-width=".7"/></svg><svg class="pvd" viewBox="0 0 8 6"><rect x=".4" y="1" width="5" height="4" rx=".8" fill="none" stroke="#e27c7c" stroke-width=".6"/><path d="M5.4 2.6L7.5 1.3v3.4L5.4 3.4z" fill="none" stroke="#e27c7c" stroke-width=".6"/><path d="M6.6 .2L1 5.8" stroke="#e27c7c" stroke-width=".7"/></svg></div>
<div class="pr hl" style="top:251.0px"><div class="av" style="background:#2f6fa8">Н</div><span class="pn">Назира Молда...</span><div class="more">Дополнительно ›</div></div>
<div class="pr" style="top:267.4px"><div class="av" style="background:#2f6fa8">Н</div><span class="pn">Нуркасымова Назерке</span><svg class="pm" viewBox="0 0 5 7"><rect x="1.6" y=".4" width="1.8" height="3.6" rx=".9" fill="none" stroke="#e27c7c" stroke-width=".6"/><path d="M.7 3.2a1.8 1.8 0 0 0 3.6 0M2.5 5v1.4" stroke="#e27c7c" stroke-width=".6" fill="none"/><path d="M4.6 .3L.6 6.4" stroke="#e27c7c" stroke-width=".7"/></svg><svg class="pvd" viewBox="0 0 8 6"><rect x=".4" y="1" width="5" height="4" rx=".8" fill="none" stroke="#e27c7c" stroke-width=".6"/><path d="M5.4 2.6L7.5 1.3v3.4L5.4 3.4z" fill="none" stroke="#e27c7c" stroke-width=".6"/><path d="M6.6 .2L1 5.8" stroke="#e27c7c" stroke-width=".7"/></svg></div>
<div class="pr" style="top:283.8px"><div class="av" style="background:#8d44c6">С</div><span class="pn">Саят Айнур</span><svg class="pm" viewBox="0 0 5 7"><rect x="1.6" y=".4" width="1.8" height="3.6" rx=".9" fill="none" stroke="#e27c7c" stroke-width=".6"/><path d="M.7 3.2a1.8 1.8 0 0 0 3.6 0M2.5 5v1.4" stroke="#e27c7c" stroke-width=".6" fill="none"/><path d="M4.6 .3L.6 6.4" stroke="#e27c7c" stroke-width=".7"/></svg><svg class="pvd" viewBox="0 0 8 6"><rect x=".4" y="1" width="5" height="4" rx=".8" fill="none" stroke="#e27c7c" stroke-width=".6"/><path d="M5.4 2.6L7.5 1.3v3.4L5.4 3.4z" fill="none" stroke="#e27c7c" stroke-width=".6"/><path d="M6.6 .2L1 5.8" stroke="#e27c7c" stroke-width=".7"/></svg></div>
<div class="pr" style="top:300.2px"><div class="av" style="background:#38445e">С</div><span class="pn">Сыдыканова Маржан🤍</span><svg class="pm" viewBox="0 0 5 7"><rect x="1.6" y=".4" width="1.8" height="3.6" rx=".9" fill="none" stroke="#e27c7c" stroke-width=".6"/><path d="M.7 3.2a1.8 1.8 0 0 0 3.6 0M2.5 5v1.4" stroke="#e27c7c" stroke-width=".6" fill="none"/><path d="M4.6 .3L.6 6.4" stroke="#e27c7c" stroke-width=".7"/></svg><svg class="pvd" viewBox="0 0 8 6"><rect x=".4" y="1" width="5" height="4" rx=".8" fill="none" stroke="#e27c7c" stroke-width=".6"/><path d="M5.4 2.6L7.5 1.3v3.4L5.4 3.4z" fill="none" stroke="#e27c7c" stroke-width=".6"/><path d="M6.6 .2L1 5.8" stroke="#e27c7c" stroke-width=".7"/></svg></div>
<div class="pr" style="top:316.6px"><svg class="av" viewBox="0 0 10 10"><rect width="10" height="10" rx="2" fill="#77726f"/><rect width="4" height="10" rx="1" fill="#9a9a9a"/><ellipse cx="6.6" cy="4.6" rx="2.2" ry="3" fill="#c9a796"/><path d="M4.2 4q.2-3 2.6-3t2.6 3q-2-1.4-5.2 0z" fill="#3a2924"/><path d="M3 10q.6-2.4 3.6-2.4t3.4 2.4z" fill="#e8e6e6"/></svg><span class="pn">ХайруллинаГульмира Тулеген...</span><svg class="pm" viewBox="0 0 5 7"><rect x="1.6" y=".4" width="1.8" height="3.6" rx=".9" fill="none" stroke="#e27c7c" stroke-width=".6"/><path d="M.7 3.2a1.8 1.8 0 0 0 3.6 0M2.5 5v1.4" stroke="#e27c7c" stroke-width=".6" fill="none"/><path d="M4.6 .3L.6 6.4" stroke="#e27c7c" stroke-width=".7"/></svg><svg class="pvd" viewBox="0 0 8 6"><rect x=".4" y="1" width="5" height="4" rx=".8" fill="none" stroke="#e27c7c" stroke-width=".6"/><path d="M5.4 2.6L7.5 1.3v3.4L5.4 3.4z" fill="none" stroke="#e27c7c" stroke-width=".6"/><path d="M6.6 .2L1 5.8" stroke="#e27c7c" stroke-width=".7"/></svg></div>
<div class="pr" style="top:333.0px"><div class="av" style="background:#2b86d1">Ы</div><span class="pn">Ыбрайжанова Лаура</span><svg class="pm" viewBox="0 0 5 7"><rect x="1.6" y=".4" width="1.8" height="3.6" rx=".9" fill="none" stroke="#e27c7c" stroke-width=".6"/><path d="M.7 3.2a1.8 1.8 0 0 0 3.6 0M2.5 5v1.4" stroke="#e27c7c" stroke-width=".6" fill="none"/><path d="M4.6 .3L.6 6.4" stroke="#e27c7c" stroke-width=".7"/></svg><svg class="pvd" viewBox="0 0 8 6"><rect x=".4" y="1" width="5" height="4" rx=".8" fill="none" stroke="#777" stroke-width=".6"/><path d="M5.4 2.6L7.5 1.3v3.4L5.4 3.4z" fill="none" stroke="#777" stroke-width=".6"/></svg></div>
<div class="pr" style="top:349.4px"><div class="av" style="background:#ee7a10">Е</div><span class="pn">Эльвира Шалкмет</span><svg class="pm" viewBox="0 0 5 7"><rect x="1.6" y=".4" width="1.8" height="3.6" rx=".9" fill="none" stroke="#e27c7c" stroke-width=".6"/><path d="M.7 3.2a1.8 1.8 0 0 0 3.6 0M2.5 5v1.4" stroke="#e27c7c" stroke-width=".6" fill="none"/><path d="M4.6 .3L.6 6.4" stroke="#e27c7c" stroke-width=".7"/></svg><svg class="pvd" viewBox="0 0 8 6"><rect x=".4" y="1" width="5" height="4" rx=".8" fill="none" stroke="#e27c7c" stroke-width=".6"/><path d="M5.4 2.6L7.5 1.3v3.4L5.4 3.4z" fill="none" stroke="#e27c7c" stroke-width=".6"/><path d="M6.6 .2L1 5.8" stroke="#e27c7c" stroke-width=".7"/></svg></div>
<div class="pr" style="top:365.8px"><div class="av" style="background:#2fa982">Т</div><span class="pn">Туманбаева Мейрамгуль</span><svg class="pvd" viewBox="0 0 8 6"><rect x=".4" y="1" width="5" height="4" rx=".8" fill="none" stroke="#e27c7c" stroke-width=".6"/><path d="M5.4 2.6L7.5 1.3v3.4L5.4 3.4z" fill="none" stroke="#e27c7c" stroke-width=".6"/><path d="M6.6 .2L1 5.8" stroke="#e27c7c" stroke-width=".7"/></svg></div>
 </div>
 <div class="abs sbt"></div><div class="abs sbh"></div>
 <div class="abs pbtn" style="left:16.8px;width:30.6px">Пригласить</div>
 <div class="abs pbtn" style="left:63.6px;width:48.800px">Включить свой звук</div>
</div>
<div class="abs wm1">Активация Windows</div>
<div class="abs wm2">Чтобы активировать Windows, перейдите в раздел "Параметры".</div>

<div id="task" class="abs">
 <svg class="tk" style="left:7.6px" viewBox="0 0 10 10"><defs><linearGradient id="wg" x1="0" y1="0" x2="1" y2="1"><stop offset="0" stop-color="#52c6ff"/><stop offset="1" stop-color="#0a7ad8"/></linearGradient></defs><path d="M.5.500h4.200v4.200H.5zM5.300.500h4.200v4.200H5.300zM.5 5.300h4.200v4.200H.5zM5.300 5.300h4.200v4.200H5.300z" fill="url(#wg)"/></svg>
 <svg class="tk" style="left:25.4px" viewBox="0 0 10 10"><circle cx="5.800" cy="4" r="3" fill="none" stroke="#222" stroke-width="1.200"/><path d="M3.600 6.200L1 9" stroke="#222" stroke-width="1.300"/></svg>
 <svg class="tk" style="left:42.6px" viewBox="0 0 10 10"><rect x="2.800" y="1" width="6.800" height="6.200" rx=".6" fill="#fff" stroke="#c4c9d0" stroke-width=".35"/><rect x=".8" y="3.800" width="6.600" height="5.600" rx=".6" fill="#262626"/></svg>
 <svg class="tk" style="left:60.4px" viewBox="0 0 10 10"><rect x=".6" y=".8" width="8.800" height="8.400" rx="1" fill="#1a6fc4"/><rect x="1.600" y="1.800" width="3.400" height="6.400" fill="#d8ecfb"/><rect x="5.600" y="1.800" width="2.800" height="3" fill="#7ec4f4"/><rect x="5.600" y="5.400" width="2.800" height="2.800" fill="#3aa0ea"/></svg>
 <svg class="tk" style="left:77.6px" viewBox="0 0 10 10"><circle cx="4.600" cy="5" r="4" fill="#6a5bd0"/><path d="M1.600 7.600L1 9.600l2.400-.8z" fill="#6a5bd0"/><rect x="3" y="3.400" width="5.600" height="3.600" rx=".8" fill="#e8e4ff"/></svg>
 <svg class="tk" style="left:95.4px" viewBox="0 0 10 10"><path d="M.5 3.800L5 .8l4.500 3V9h-9z" fill="#1478d4"/><path d="M.5 3.800L5 6.600l4.500-2.800V9h-9z" fill="#4cb0f4"/><path d="M.5 9L5 5.800 9.500 9z" fill="#2492e6"/></svg>
 <svg class="tk" style="left:113.2px" viewBox="0 0 10 10"><circle cx="5" cy="5" r="4.400" fill="#1c84d8"/><path d="M1 6.600q2-4.200 7.600-3.200q-1-3-4.200-2.800q-3.600.6-3.400 6z" fill="#39c2a0"/><path d="M3 7.600q3.600 1.400 6-1.400q-3 .8-4.200-.8q-1.800 0-1.800 2.200z" fill="#eaf6ff"/></svg>
 <svg class="tk" style="left:131px" viewBox="0 0 10 10"><path d="M.5 2h3.400l1 1h4.600v5.600h-9z" fill="#e8a818"/><rect x=".5" y="3.600" width="9" height="5.400" rx=".5" fill="#fcd14a"/><rect x="3" y="6.800" width="4" height="1.200" fill="#3a8ad8"/></svg>
 <svg class="tk" style="left:148.4px" viewBox="0 0 10 10"><path d="M3.200 2.400V1.400h3.600v1" stroke="#1766b8" stroke-width=".8" fill="none"/><rect x=".8" y="2.400" width="8.400" height="6.800" rx=".8" fill="#1766b8"/><rect x="3.200" y="4" width="1.600" height="1.600" fill="#f25022"/><rect x="5.200" y="4" width="1.600" height="1.600" fill="#7fba00"/><rect x="3.200" y="6" width="1.600" height="1.600" fill="#00a4ef"/><rect x="5.200" y="6" width="1.600" height="1.600" fill="#ffb900"/></svg>
 <svg class="tk" style="left:166px" viewBox="0 0 10 10"><circle cx="5" cy="5.200" r="4.200" fill="#e33b2e"/><path d="M5 5.200L1.400 3.100A4.200 4.200 0 0 0 4.600 9.400z" fill="#2ba24c"/><path d="M5 5.200L4.600 9.400A4.200 4.200 0 0 0 8.700 3.200z" fill="#fcc31e"/><circle cx="5" cy="5.200" r="1.900" fill="#fff"/><circle cx="5" cy="5.200" r="1.400" fill="#3b7ded"/><circle cx="8" cy="1.800" r="1.600" fill="#8a7a6a"/></svg>
 <svg class="tk" style="left:183.6px" viewBox="0 0 10 10"><rect x=".8" y=".8" width="8.400" height="8.400" rx=".8" fill="#dff0d8"/><path d="M1.800 8L4 4l1.600 2.400L8.200 2" stroke="#2e9a48" stroke-width="1.100" fill="none"/><rect x=".8" y=".8" width="8.400" height="8.400" rx=".8" fill="none" stroke="#6ab070" stroke-width=".5"/></svg>
 <svg class="tk" style="left:201.4px" viewBox="0 0 10 10"><rect x="1.600" y=".5" width="7.200" height="9" rx=".6" fill="#fbfcfe" stroke="#b4c6e0" stroke-width=".4"/><path d="M2.400 2.400l1.200 4.200L5 3l1.400 3.600 1.200-4.200" stroke="#1d58b0" stroke-width="1.100" fill="none"/><rect x="2.600" y="7.600" width="5" height=".8" fill="#7fa4da"/></svg>
 <div class="abs" style="left:216.6px;top:1.800px;width:14.400px;height:16px;border-radius:1.600px;background:#f3f6fa"></div>
 <svg class="tk" style="left:218.6px" viewBox="0 0 10 10"><rect x=".4" y=".4" width="9.200" height="9.200" rx="2.400" fill="#3d8bf5"/><rect x="2" y="3.400" width="4" height="3.200" rx=".8" fill="#fff"/><path d="M6.300 4.600L8 3.500v3L6.300 5.400z" fill="#fff"/></svg>
 <div class="abs" style="left:221.2px;top:17.6px;width:5.200px;height:.9px;border-radius:.5px;background:#5a6a80"></div>
 <div class="abs" style="left:135.2px;top:17.600px;width:2px;height:.8px;background:#8a94a2"></div>
 <div class="abs" style="left:170.200px;top:17.600px;width:2px;height:.8px;background:#8a94a2"></div>
 <div class="abs" style="left:187.800px;top:17.600px;width:2px;height:.8px;background:#8a94a2"></div>
 <div class="abs" style="left:205.6px;top:17.600px;width:2px;height:.8px;background:#8a94a2"></div>

 <svg class="abs" style="left:665.4px;top:8.600px;width:4px;height:2.600px" viewBox="0 0 4 2.600"><path d="M.3 2.300L2 .5l1.700 1.800" stroke="#333" stroke-width=".6" fill="none"/></svg>
 <svg class="abs" style="left:673.6px;top:7px;width:6.400px;height:6.400px" viewBox="0 0 6.4 6.4"><rect x=".6" y=".6" width="4.600" height="4.600" rx="1" fill="none" stroke="#333" stroke-width=".7"/><circle cx="4.400" cy="4.600" r="1.600" fill="#e0282a"/></svg>
 <svg class="abs" style="left:685.6px;top:6.600px;width:4.600px;height:7px" viewBox="0 0 4.6 7"><rect x="1.300" y=".3" width="2" height="3.800" rx="1" fill="#8a919c"/><path d="M.5 3.200a1.800 1.800 0 0 0 3.600 0M2.300 5v1.500" stroke="#8a919c" stroke-width=".6" fill="none"/></svg>
 <div class="tray" style="left:698.4px;top:7.200px">КАЗ</div>
 <svg class="abs" style="left:714.8px;top:6.800px;width:6.400px;height:6.600px" viewBox="0 0 6.4 6.600"><rect x=".4" y=".4" width="4.600" height="4" rx=".5" fill="none" stroke="#333" stroke-width=".7"/><path d="M1.600 5.800h2.200" stroke="#333" stroke-width=".7"/><rect x="4" y="2.400" width="2.200" height="3.800" rx=".4" fill="#e5ebf3" stroke="#333" stroke-width=".6"/></svg>
 <svg class="abs" style="left:724.8px;top:7.200px;width:7px;height:5.600px" viewBox="0 0 7 5.600"><path d="M.4 1.900h1.300L3.400.4v4.800L1.700 3.700H.4z" fill="none" stroke="#333" stroke-width=".6"/><path d="M4.600 1.800l2 2M6.600 1.800l-2 2" stroke="#333" stroke-width=".6"/></svg>
 <div class="tray" style="left:747.2px;top:3.800px;font-size:4.200px">15:19</div>
 <div class="tray" style="right:7.6px;top:9.600px;font-size:4.200px">22.06.2022</div>
</div>
</div></div>
</body></html>
